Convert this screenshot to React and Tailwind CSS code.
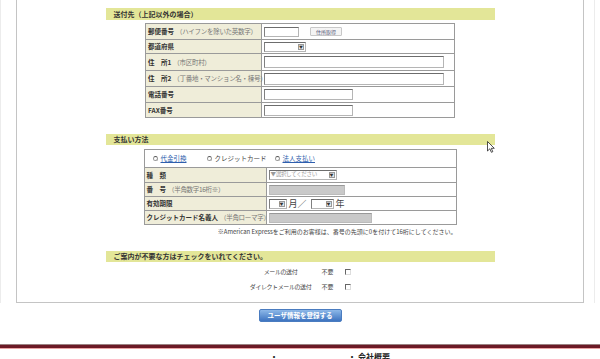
import React from "react";

const labelCls =
  "flex shrink-0 items-center whitespace-nowrap bg-[#efedd9] px-[2px] text-[6.5px] font-bold leading-none text-[#333] border-r border-[#9a9a9a]";

const inputCls =
  "border border-[#b5b5b5] border-t-[#6d6d6d] border-l-[#808080] bg-white";

function Label({ title, note, w }) {
  return (
    <div className={`${labelCls} ${w}`}>
      <span>{title}</span>
      {note && (
        <span className="ml-[2px] text-[6.5px] font-normal tracking-[-0.3px] text-[#777]">
          {note}
        </span>
      )}
    </div>
  );
}

function Row({ h, first, children }) {
  return (
    <div className={`flex ${h} ${first ? "" : "border-t border-[#9a9a9a]"}`}>
      {children}
    </div>
  );
}

function SelectBox({ w, text }) {
  return (
    <div className={`flex h-[10px] items-center justify-between ${inputCls} ${w}`}>
      <span className="whitespace-nowrap pl-[1px] text-[5.5px] leading-none tracking-[-0.3px] text-[#9a9a9a]">
        {text}
      </span>
      <span className="mr-[1px] flex h-[6px] w-[6px] shrink-0 items-center justify-center border border-[#999] bg-[#e8e8e8] text-[4px] leading-none text-[#333]">
        ▼
      </span>
    </div>
  );
}

function Header({ h, children }) {
  return (
    <div
      className={`mx-auto flex ${h} w-[389px] items-center bg-[#e3e698] pl-[8px] text-[7px] font-bold leading-none text-[#333]`}
    >
      {children}
    </div>
  );
}

function Radio({ label, link }) {
  return (
    <div className="flex items-center whitespace-nowrap">
      <span className="h-[5px] w-[5px] rounded-full border border-[#999] border-t-[#555] bg-white" />
      <span
        className={`ml-[3px] text-[6.5px] leading-none ${
          link ? "text-[#2f5fae] underline" : "text-[#444]"
        }`}
      >
        {label}
      </span>
    </div>
  );
}

function OptOut({ label }) {
  return (
    <div className="flex h-[15px] items-center justify-center whitespace-nowrap text-[6px] leading-none text-[#444]">
      <span className="flex w-[62px] justify-center tracking-[-0.4px]">
        <span>{label}</span>
      </span>
      <span className="ml-[10px] w-[17px]">不要</span>
      <span className="ml-[6px] h-[6px] w-[6px] border border-[#ddd] border-t-[#666] border-l-[#666]" />
    </div>
  );
}

export default function App() {
  return (
    <div className="relative h-[359px] w-[600px] overflow-hidden bg-white font-['Noto_Sans_CJK_JP',sans-serif]">
      <div className="w-[595px] border-x border-[#ececec]">
        <div className="ml-[15px] w-[568px] border-x border-b border-[#c4c4c4] pb-[8px] pt-[8px]">
          {/* 送付先 */}
          <Header h="h-[12px]">送付先（上記以外の場合）</Header>
          <div className="mx-auto mt-[3px] w-[310px] border border-[#9a9a9a]">
            <Row h="h-[15px]" first>
              <Label w="w-[116px]" title="郵便番号" note="（ハイフンを除いた英数字）" />
              <div className="flex items-center pl-[2px]">
                <div className={`h-[10px] w-[35px] ${inputCls}`} />
                <div className="ml-[11px] flex h-[9px] w-[32px] items-center justify-center rounded-[1px] border border-[#c8c8c8] bg-[#f4f4f4] text-[5px] leading-none text-[#557]">
                  住所取得
                </div>
              </div>
            </Row>
            <Row h="h-[14px]">
              <Label w="w-[116px]" title="都道府県" />
              <div className="flex items-center pl-[2px]">
                <SelectBox w="w-[42px]" text="" />
              </div>
            </Row>
            <Row h="h-[17px]">
              <Label w="w-[116px]" title="住　所1" note="（市区町村）" />
              <div className="flex items-center pl-[2px]">
                <div className={`h-[12px] w-[180px] ${inputCls}`} />
              </div>
            </Row>
            <Row h="h-[16px]">
              <Label w="w-[116px]" title="住　所2" note="（丁番地・マンション名・棟号）" />
              <div className="flex items-center pl-[2px]">
                <div className={`h-[12px] w-[180px] ${inputCls}`} />
              </div>
            </Row>
            <Row h="h-[16px]">
              <Label w="w-[116px]" title="電話番号" />
              <div className="flex items-center pl-[2px]">
                <div className={`h-[11px] w-[89px] ${inputCls}`} />
              </div>
            </Row>
            <Row h="h-[15px]">
              <Label w="w-[116px]" title="FAX番号" />
              <div className="flex items-center pl-[2px]">
                <div className={`h-[11px] w-[89px] ${inputCls}`} />
              </div>
            </Row>
          </div>

          {/* 支払い方法 */}
          <div className="mt-[16px]">
            <Header h="h-[11px]">支払い方法</Header>
          </div>
          <div className="mx-auto mt-[4px] w-[313px] border border-[#9a9a9a]">
            <Row h="h-[17px]" first>
              <div className="flex flex-1 items-center pl-[8px]">
                <div className="w-[54px]">
                  <Radio label="代金引換" link />
                </div>
                <div className="w-[68px]">
                  <Radio label="クレジットカード" />
                </div>
                <Radio label="法人支払い" link />
              </div>
            </Row>
            <Row h="h-[15px]">
              <Label w="w-[122px]" title="種　類" />
              <div className="flex items-center pl-[2px]">
                <SelectBox w="w-[68px]" text="▼選択してください" />
              </div>
            </Row>
            <Row h="h-[14px]">
              <Label w="w-[122px]" title="番　号" note="（半角数字16桁※）" />
              <div className="flex items-center pl-[2px]">
                <div className="h-[10px] w-[76px] border border-[#bbb] border-t-[#999] bg-[#c9c9c9]" />
              </div>
            </Row>
            <Row h="h-[14px]">
              <Label w="w-[122px]" title="有効期限" />
              <div className="flex items-center pl-[2px] text-[9px] leading-none text-[#444]">
                <SelectBox w="w-[18px]" text="" />
                <span className="ml-[2px]">月／</span>
                <span className="ml-[4px]">
                  <SelectBox w="w-[23px]" text="" />
                </span>
                <span className="ml-[2px]">年</span>
              </div>
            </Row>
            <Row h="h-[14px]">
              <Label w="w-[122px]" title="クレジットカード名義人" note="（半角ローマ字）" />
              <div className="flex items-center pl-[2px]">
                <div className="h-[10px] w-[103px] border border-[#bbb] border-t-[#999] bg-[#c9c9c9]" />
              </div>
            </Row>
          </div>
          <div className="mx-auto mt-[1px] flex h-[11px] w-[313px] items-center justify-end whitespace-nowrap text-[6px] leading-none text-[#444]">
            ※American Expressをご利用のお客様は、番号の先頭に0を付けて16桁にしてください。
          </div>

          {/* ご案内 */}
          <div className="mt-[14px]">
            <Header h="h-[11px]">ご案内が不要な方はチェックをいれてください。</Header>
          </div>
          <div className="mt-[2px]">
            <OptOut label="メールの送付" />
            <OptOut label="ダイレクトメールの送付" />
          </div>
        </div>
      </div>

      <div className="mx-auto mt-[6px] flex h-[13px] w-[83px] items-center justify-center rounded-[2px] border border-[#4a7cc0] bg-gradient-to-b from-[#8db8e8] to-[#3e74c0] text-[6.5px] font-bold leading-none text-white">
        ユーザ情報を登録する
      </div>

      <div className="mt-[22px] h-[1px] bg-[#9a8080]" />
      <div className="h-[3px] bg-[#6c1a26]" />
      <div className="h-[1px] bg-[#eaa4a4]" />
      <div className="mt-[4px] flex justify-center gap-[70px] pl-[60px] text-[8px] font-bold leading-none text-[#222]">
        <span>・</span>
        <span>・ 会社概要</span>
      </div>

      <svg
        className="absolute left-[487px] top-[141px]"
        width="8"
        height="12"
        viewBox="0 0 8 12"
      >
        <path
          d="M0.5 0.5 L0.5 10 L2.8 7.8 L4.4 11.3 L5.8 10.7 L4.3 7.3 L7.3 7.3 Z"
          fill="#fff"
          stroke="#222"
          strokeWidth="0.8"
        />
      </svg>
    </div>
  );
}
